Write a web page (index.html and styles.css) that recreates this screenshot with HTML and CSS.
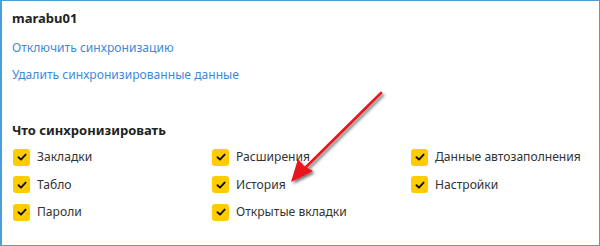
FILE: index.html
```html
<!DOCTYPE html>
<html>
<head>
<meta charset="utf-8">
<link rel="stylesheet" href="styles.css">
</head>
<body>
<div class="frame">
  <div class="user">marabu01</div>
  <a class="link link-first">Отключить синхронизацию</a>
  <a class="link">Удалить синхронизированные данные</a>
  <div class="heading">Что синхронизировать</div>
  <div class="grid">
    <div class="item"><span class="cb"><svg viewBox="0 0 16 16" width="16" height="16"><path d="M4.5 8.2 L7 10.6 L11.6 5.6" fill="none" stroke="#111" stroke-width="1.9" stroke-linecap="round" stroke-linejoin="round"/></svg></span>Закладки</div>
    <div class="item"><span class="cb"><svg viewBox="0 0 16 16" width="16" height="16"><path d="M4.5 8.2 L7 10.6 L11.6 5.6" fill="none" stroke="#111" stroke-width="1.9" stroke-linecap="round" stroke-linejoin="round"/></svg></span>Расширения</div>
    <div class="item"><span class="cb"><svg viewBox="0 0 16 16" width="16" height="16"><path d="M4.5 8.2 L7 10.6 L11.6 5.6" fill="none" stroke="#111" stroke-width="1.9" stroke-linecap="round" stroke-linejoin="round"/></svg></span>Данные автозаполнения</div>
    <div class="item"><span class="cb"><svg viewBox="0 0 16 16" width="16" height="16"><path d="M4.5 8.2 L7 10.6 L11.6 5.6" fill="none" stroke="#111" stroke-width="1.9" stroke-linecap="round" stroke-linejoin="round"/></svg></span>Табло</div>
    <div class="item"><span class="cb"><svg viewBox="0 0 16 16" width="16" height="16"><path d="M4.5 8.2 L7 10.6 L11.6 5.6" fill="none" stroke="#111" stroke-width="1.9" stroke-linecap="round" stroke-linejoin="round"/></svg></span>История</div>
    <div class="item"><span class="cb"><svg viewBox="0 0 16 16" width="16" height="16"><path d="M4.5 8.2 L7 10.6 L11.6 5.6" fill="none" stroke="#111" stroke-width="1.9" stroke-linecap="round" stroke-linejoin="round"/></svg></span>Настройки</div>
    <div class="item"><span class="cb"><svg viewBox="0 0 16 16" width="16" height="16"><path d="M4.5 8.2 L7 10.6 L11.6 5.6" fill="none" stroke="#111" stroke-width="1.9" stroke-linecap="round" stroke-linejoin="round"/></svg></span>Пароли</div>
    <div class="item"><span class="cb"><svg viewBox="0 0 16 16" width="16" height="16"><path d="M4.5 8.2 L7 10.6 L11.6 5.6" fill="none" stroke="#111" stroke-width="1.9" stroke-linecap="round" stroke-linejoin="round"/></svg></span>Открытые вкладки</div>
  </div>
  <svg class="arrow" width="600" height="246" viewBox="0 0 600 246">
    <defs>
      <filter id="sh" x="-20%" y="-20%" width="140%" height="140%">
        <feGaussianBlur in="SourceAlpha" stdDeviation="1.6"/>
        <feOffset dx="2" dy="2" result="b"/>
        <feComponentTransfer><feFuncA type="linear" slope="0.55"/></feComponentTransfer>
        <feMerge><feMergeNode/><feMergeNode in="SourceGraphic"/></feMerge>
      </filter>
    </defs>
    <g filter="url(#sh)">
      <line x1="381" y1="93" x2="306" y2="167" stroke="#e8141b" stroke-width="2.6" stroke-linecap="round"/>
      <path d="M291 182 L298 159 L304 166 L313 171 Z" fill="#e8141b"/>
    </g>
  </svg>
</div>
</body>
</html>
```
FILE: styles.css
```css
html, body {
  margin: 0;
  padding: 0;
  background: #fff;
}
.frame {
  position: relative;
  box-sizing: border-box;
  width: 600px;
  height: 246px;
  border: 1px solid #4a9fdb;
  border-left-width: 2px;
  padding: 8px 0 0 10px;
  display: flex;
  flex-direction: column;
  font-family: "Noto Sans", "Open Sans", sans-serif;
  font-size: 12.1px;
  color: #333;
  overflow: hidden;
}
.user {
  font-weight: bold;
  color: #222;
  line-height: 18px;
  font-size: 13px;
}
.link {
  color: #3f8ad6;
  line-height: 18px;
  margin-top: 9px;
  align-self: flex-start;
}
.link-first {
  margin-top: 12px;
}
.heading {
  font-weight: bold;
  color: #222;
  line-height: 18px;
  margin-top: 37px;
  font-size: 13px;
}
.grid {
  display: grid;
  grid-template-columns: 199px 199px 1fr;
  row-gap: 9.5px;
  margin-top: 9px;
}
.item {
  display: flex;
  align-items: center;
  line-height: 18px;
  padding-left: 1px;
}
.cb {
  width: 17px;
  height: 17px;
  border-radius: 3px;
  background: #ffcc00;
  margin-right: 7px;
  display: flex;
  align-items: center;
  justify-content: center;
  flex: none;
}
.cb svg {
  display: block;
}
.arrow {
  position: absolute;
  left: -2px;
  top: -1px;
  pointer-events: none;
}
```
